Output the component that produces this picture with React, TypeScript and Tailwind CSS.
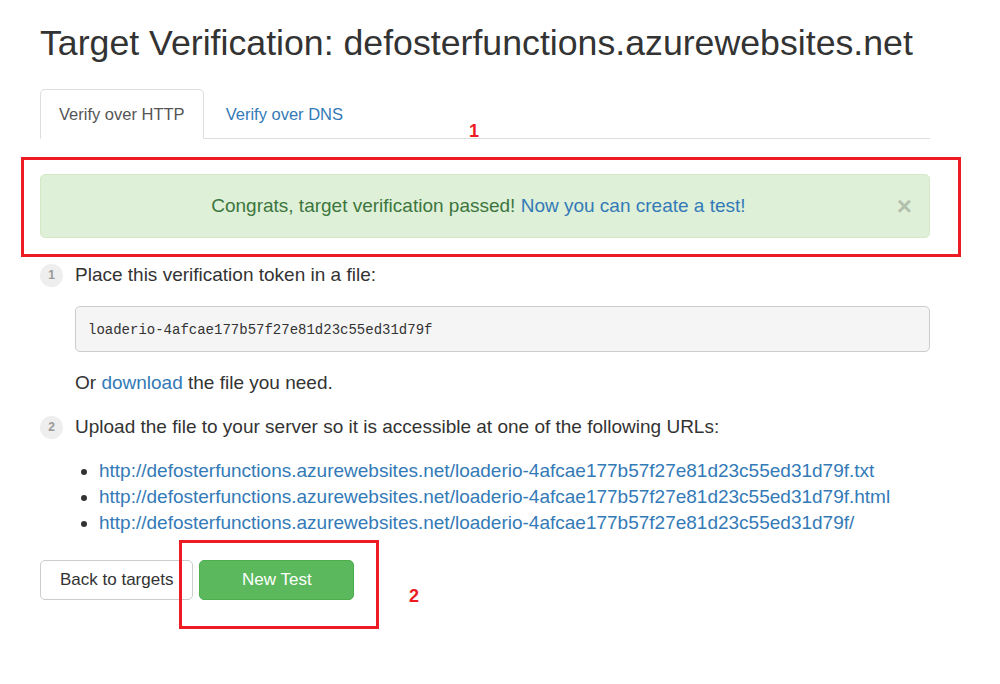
import React from "react";

const TOKEN = "loaderio-4afcae177b57f27e81d23c55ed31d79f";
const HOST = "http://defosterfunctions.azurewebsites.net/";

const urls = [`${HOST}${TOKEN}.txt`, `${HOST}${TOKEN}.html`, `${HOST}${TOKEN}/`];

function StepBadge({ n }: { n: number }) {
  return (
    <span className="flex h-[23px] w-[23px] shrink-0 items-center justify-center rounded-full bg-[#eeeeee] text-[12px] font-bold text-[#999999]">
      {n}
    </span>
  );
}

export default function App() {
  return (
    <div
      className="relative h-[684px] w-[1000px] overflow-hidden bg-white text-[19px] leading-[26px] text-[#333333]"
      style={{ fontFamily: '"Liberation Sans", Arial, sans-serif' }}
    >
      <div className="pl-[40px] pr-[70px] pt-[23px]">
        <h1 className="whitespace-nowrap text-[35.7px] font-normal leading-[41px] text-[#333333]">
          Target Verification: defosterfunctions.azurewebsites.net
        </h1>

        {/* Tabs */}
        <ul className="mt-[25px] flex border-b border-[#dddddd]">
          <li className="-mb-px">
            <span className="block rounded-t-[5px] border border-[#dddddd] border-b-transparent bg-white px-[18px] py-[11px] text-[16.5px] leading-[26px] text-[#555555]">
              Verify over HTTP
            </span>
          </li>
          <li className="-mb-px">
            <span className="block border border-transparent px-[21px] py-[11px] text-[16.5px] leading-[26px] text-[#337ab7]">
              Verify over DNS
            </span>
          </li>
        </ul>

        {/* Success alert */}
        <div className="mt-[35px] flex items-center rounded-[5px] border border-[#d6e9c6] bg-[#dff0d8] px-[19px] py-[18px] text-[#3c763d]">
          <p className="flex-1 text-center">
            Congrats, target verification passed!{" "}
            <span className="text-[#337ab7]">Now you can create a test!</span>
          </p>
          <span className="mr-[-2px] text-[26px] font-bold leading-[26px] text-black opacity-20">
            ×
          </span>
        </div>

        {/* Step 1 */}
        <div className="mt-[24px] flex items-center gap-[12px]">
          <StepBadge n={1} />
          <span>Place this verification token in a file:</span>
        </div>
        <pre
          className="ml-[35px] mt-[18px] rounded-[5px] border border-[#cccccc] bg-[#f5f5f5] px-[12px] pb-[11px] pt-[13px] text-[14px] leading-[20px] text-[#333333]"
          style={{ fontFamily: '"Liberation Mono", "DejaVu Sans Mono", monospace' }}
        >
          {TOKEN}
        </pre>
        <p className="ml-[35px] mt-[18px]">
          Or <span className="text-[#337ab7]">download</span> the file you need.
        </p>

        {/* Step 2 */}
        <div className="mt-[18px] flex items-center gap-[12px]">
          <StepBadge n={2} />
          <span className="whitespace-nowrap">
            Upload the file to your server so it is accessible at one of the following URLs:
          </span>
        </div>
        <ul className="ml-[35px] mt-[18px] list-disc pl-[24px]">
          {urls.map((u) => (
            <li key={u} className="whitespace-nowrap text-[#337ab7] marker:text-[#333333]">
              {u}
            </li>
          ))}
        </ul>

        {/* Buttons */}
        <div className="mt-[24px] flex gap-[6px]">
          <button
            type="button"
            className="h-[40px] rounded-[5px] border border-[#cccccc] bg-white px-[19px] text-[17px] text-[#333333]"
          >
            Back to targets
          </button>
          <button
            type="button"
            className="h-[40px] w-[155px] rounded-[5px] border border-[#4cae4c] bg-[#5cb85c] text-[17px] text-white"
          >
            New Test
          </button>
        </div>
      </div>

      {/* Red annotations */}
      <div className="pointer-events-none absolute left-[21px] top-[157px] h-[100px] w-[940px] border-[3px] border-[#ed1c24]" />
      <span className="absolute left-[469px] top-[119px] text-[18px] font-bold leading-[24px] text-[#ed1c24]">1</span>
      <div className="pointer-events-none absolute left-[179px] top-[540px] h-[89px] w-[200px] border-[3px] border-[#ed1c24]" />
      <span className="absolute left-[409px] top-[584px] text-[18px] font-bold leading-[24px] text-[#ed1c24]">2</span>
    </div>
  );
}
